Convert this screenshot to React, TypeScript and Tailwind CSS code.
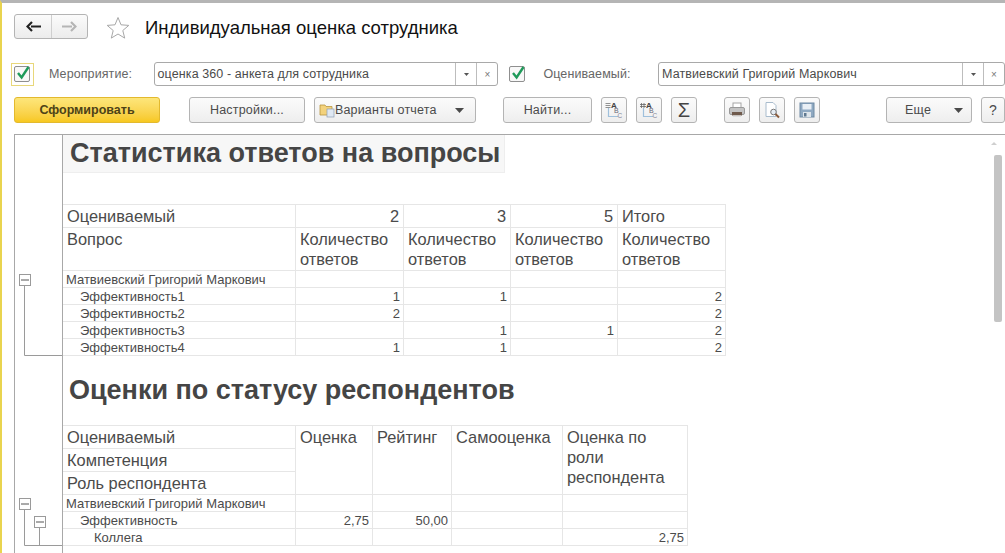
const btnBase =
  "flex h-[26px] items-center rounded-[3px] border border-[#b4b4b4] bg-gradient-to-b from-[#fbfbfb] to-[#eeeeee] text-[12.500px] text-[#4b4b4b]";
const btn = `${btnBase} justify-center`;

function Caret({ className }: { className?: string }) {
  return (
    <svg width="9" height="5" viewBox="0 0 9 5" className={className}>
      <path d="M0 0h9L4.500 5z" fill="#4a4a4a" />
    </svg>
  );
}

function Check() {
  return (
    <span className="flex h-[16px] w-[16px] items-center justify-center rounded-[2px] border border-[#8f8f8f] bg-[#f8f8f8]">
      <svg width="16" height="16" viewBox="0 0 16 16" className="-mt-[3px] ml-[1px] shrink-0">
        <path d="M3 8l3.600 4.500L13.500 2" fill="none" stroke="#1f9a5a" strokeWidth="2.400" />
      </svg>
    </span>
  );
}

function Field({ value, className }: { value: string; className: string }) {
  return (
    <div className={`flex h-[24px] items-stretch rounded-[3px] border border-[#a9a9a9] bg-white text-[12.500px] text-[#4b4b4b] ${className}`}>
      <span className="flex-1 truncate pl-[3px] leading-[22px] tracking-[0.1px]">{value}</span>
      <span className="flex w-[21px] items-center justify-center border-l border-[#bdbdbd]">
        <svg width="5" height="3" viewBox="0 0 5 3">
          <path d="M0 0h5L2.500 3z" fill="#555" />
        </svg>
      </span>
      <span className="flex w-[21px] items-center justify-center border-l border-[#bdbdbd] text-[10px] text-[#777]">×</span>
    </div>
  );
}

function IconBtn({ children, className = "" }: { children: React.ReactNode; className?: string }) {
  return <div className={`${btn} w-[26px] ${className}`}>{children}</div>;
}

function StructIcon({ plus }: { plus?: boolean }) {
  return (
    <svg width="20" height="20" viewBox="0 0 20 20" style={{ fontFamily: "Liberation Sans" }}>
      <path d="M4.500 8v8.500H14" fill="none" stroke="#9fc0dc" strokeWidth="1.200" />
      {plus ? (
        <path d="M1 4.500h6M1 6.500h6M2.500 3v5M5 3v5" stroke="#666" strokeWidth="0.800" />
      ) : (
        <path d="M1.500 3.500h5M1.500 5.500h5M1.500 7.500h5" stroke="#777" strokeWidth="0.800" />
      )}
      <text x="7" y="8" fontSize="8" fontWeight="700" fill="#444">A</text>
      <text x="10" y="13" fontSize="7" fill="#667">B</text>
      <text x="13.500" y="18" fontSize="6.500" fill="#889">C</text>
    </svg>
  );
}

function TitleBar() {
  return (
    <div className="flex h-[50px] items-center pl-[12px]">
      <div className="-mt-[3px] flex h-[25px] w-[74px] rounded-[3px] border border-[#b4b4b4] bg-gradient-to-b from-[#fbfbfb] to-[#ececec]">
        <span className="flex w-[37px] items-center justify-center border-r border-[#cfcfcf]">
          <svg width="15" height="11" viewBox="0 0 15 11">
            <path d="M15 5.500H5M6 1L1.500 5.500 6 10" fill="none" stroke="#222" strokeWidth="2.200" />
          </svg>
        </span>
        <span className="flex flex-1 items-center justify-center">
          <svg width="15" height="11" viewBox="0 0 15 11">
            <path d="M0 5.500h10M9 1l4.500 4.500L9 10" fill="none" stroke="#b5b5b5" strokeWidth="2.200" />
          </svg>
        </span>
      </div>
      <svg width="24" height="24" viewBox="0 0 24 24" className="ml-[18px]">
        <path d="M12 1.500l3 7.300 7.800.6-6 5.100 1.900 7.600L12 18l-6.700 4.100 1.900-7.600-6-5.100 7.800-.6z" fill="#fff" stroke="#a8a8a8" strokeWidth="1" />
      </svg>
      <h1 className="ml-[15px] text-[18.500px] leading-none text-[#111]">Индивидуальная оценка сотрудника</h1>
    </div>
  );
}

function FilterRow() {
  return (
    <div className="mt-[9px] flex h-[24px] items-center pl-[9px] text-[12.500px] text-[#666]">
      <span className="flex h-[23px] w-[23px] items-center justify-center border border-[#e8d77a]">
        <Check />
      </span>
      <span className="ml-[15px] w-[105px] tracking-[0.1px]">Мероприятие:</span>
      <Field value="оценка 360 - анкета для сотрудника" className="w-[346px]" />
      <span className="ml-[11px]">
        <Check />
      </span>
      <span className="ml-[18px] w-[115px] tracking-[0.1px]">Оцениваемый:</span>
      <Field value="Матвиевский Григорий Маркович" className="w-[347px] shrink-0" />
    </div>
  );
}

function ButtonRow() {
  return (
    <div className="mt-[11px] flex h-[26px] items-center pl-[12px]">
      <div className="flex h-[26px] w-[146px] items-center justify-center rounded-[3px] border border-[#e3b92e] bg-gradient-to-b from-[#fde67a] to-[#f7c81e] text-[12.500px] font-bold text-[#4d4218]">
        Сформировать
      </div>
      <div className={`${btn} ml-[29px] w-[116px] tracking-[0.2px]`}>Настройки...</div>
      <div className={`${btnBase} ml-[9px] w-[162px] pl-[4px] pr-[11px]`}>
        <svg width="16" height="16" viewBox="0 0 16 16" className="shrink-0">
          <path d="M1 3h5l1 1.500h6V13H1z" fill="#f3d27c" stroke="#b7963f" strokeWidth="0.800" />
          <rect x="8" y="7" width="7" height="8" fill="#dfe8f3" stroke="#8e9db3" strokeWidth="0.700" />
        </svg>
        <span className="flex-1 tracking-[0.15px]">Варианты отчета</span>
        <Caret />
      </div>
      <div className={`${btn} ml-[27px] w-[89px] tracking-[0.2px]`}>Найти...</div>
      <IconBtn className="ml-[9px]">
        <StructIcon />
      </IconBtn>
      <IconBtn className="ml-[9px]">
        <StructIcon plus />
      </IconBtn>
      <IconBtn className="ml-[9px]">
        <span className="text-[20px] leading-none text-[#444]">Σ</span>
      </IconBtn>
      <IconBtn className="ml-[27px]">
        <svg width="20" height="20" viewBox="0 0 20 20">
          <rect x="6" y="3" width="8" height="5" fill="#fff" stroke="#a5a5a5" />
          <rect x="2.500" y="7.500" width="15" height="7" rx="1.500" fill="#c4c4c4" stroke="#999" />
          <rect x="5" y="12" width="10" height="3.500" fill="#6f5a4c" />
          <rect x="6" y="15.500" width="8" height="1.500" fill="#ddd" />
        </svg>
      </IconBtn>
      <IconBtn className="ml-[9px]">
        <svg width="20" height="20" viewBox="0 0 20 20">
          <path d="M4 2.500h7l3 3v11H4z" fill="#fff" stroke="#a9bccd" />
          <circle cx="11.500" cy="12" r="2.800" fill="#e6edf4" stroke="#777" />
          <path d="M13.500 14l3.500 3.500" stroke="#8a5a3a" strokeWidth="2" />
        </svg>
      </IconBtn>
      <IconBtn className="ml-[9px]">
        <svg width="18" height="18" viewBox="0 0 18 18">
          <rect x="2" y="2" width="14" height="14" fill="#8fa9c2" stroke="#6f8aa3" />
          <rect x="4.500" y="3" width="9" height="5.500" fill="#e9eff5" />
          <rect x="5" y="11" width="8" height="5" fill="#dde4ea" />
          <rect x="6" y="12" width="2.500" height="3.500" fill="#5f7890" />
        </svg>
      </IconBtn>
      <div className={`${btnBase} ml-[66px] w-[86px] pr-[8px]`}>
        <span className="flex-1 pl-[18px] tracking-[0.2px]">Еще</span>
        <Caret />
      </div>
      <div className={`${btn} ml-[9px] w-[24px] shrink-0 text-[14px]`}>?</div>
    </div>
  );
}

const cell = "border-b border-r border-[#e6e6e6] overflow-hidden";

function HeadCell({ children, right, className = "" }: { children: React.ReactNode; right?: boolean; className?: string }) {
  return (
    <div className={`${cell} px-[4px] pt-[1px] text-[16.400px] leading-[20px] text-[#4b4b4b] ${right ? "text-right" : ""} ${className}`}>
      {children}
    </div>
  );
}

function DataCell({ children, right, pad = 3 }: { children?: React.ReactNode; right?: boolean; pad?: 3 | 17 | 31 }) {
  const padClass = pad === 31 ? "pl-[31px]" : pad === 17 ? "pl-[17px]" : "pl-[3px]";
  return (
    <div className={`${cell} ${padClass} pr-[3px] text-[13px] leading-[18px] text-[#4b4b4b] whitespace-nowrap ${right ? "text-right" : ""}`}>
      {children}
    </div>
  );
}

const rows1 = [
  ["Эффективность1", "1", "1", "", "2"],
  ["Эффективность2", "2", "", "", "2"],
  ["Эффективность3", "", "1", "1", "2"],
  ["Эффективность4", "1", "1", "", "2"],
];

function Table1() {
  return (
    <div className="mt-[31px] grid w-[663px] grid-cols-[233px_108px_107px_107px_108px] grid-rows-[23px_43px_17px_17px_17px_17px_17px] border-t border-[#e6e6e6]">
      <HeadCell>Оцениваемый</HeadCell>
      <HeadCell right>2</HeadCell>
      <HeadCell right>3</HeadCell>
      <HeadCell right>5</HeadCell>
      <HeadCell>Итого</HeadCell>
      <HeadCell>Вопрос</HeadCell>
      <HeadCell>Количество ответов</HeadCell>
      <HeadCell>Количество ответов</HeadCell>
      <HeadCell>Количество ответов</HeadCell>
      <HeadCell>Количество ответов</HeadCell>
      <DataCell>Матвиевский Григорий Маркович</DataCell>
      <DataCell />
      <DataCell />
      <DataCell />
      <DataCell />
      {rows1.map((r) => (
        <div key={r[0]} className="contents">
          <DataCell pad={17}>{r[0]}</DataCell>
          <DataCell right>{r[1]}</DataCell>
          <DataCell right>{r[2]}</DataCell>
          <DataCell right>{r[3]}</DataCell>
          <DataCell right>{r[4]}</DataCell>
        </div>
      ))}
    </div>
  );
}

function Table2() {
  return (
    <div className="grid w-[625px] grid-cols-[233px_77px_79px_111px_125px] grid-rows-[23px_23px_23px_17px_17px_17px] border-t border-[#e6e6e6]">
      <HeadCell>Оцениваемый</HeadCell>
      <HeadCell className="row-span-3">Оценка</HeadCell>
      <HeadCell className="row-span-3">Рейтинг</HeadCell>
      <HeadCell className="row-span-3">Самооценка</HeadCell>
      <HeadCell className="row-span-3 pr-[16px]">Оценка по роли респондента</HeadCell>
      <HeadCell>Компетенция</HeadCell>
      <HeadCell>Роль респондента</HeadCell>
      <DataCell>Матвиевский Григорий Маркович</DataCell>
      <DataCell />
      <DataCell />
      <DataCell />
      <DataCell />
      <DataCell pad={17}>Эффективность</DataCell>
      <DataCell right>2,75</DataCell>
      <DataCell right>50,00</DataCell>
      <DataCell />
      <DataCell />
      <DataCell pad={31}>Коллега</DataCell>
      <DataCell />
      <DataCell />
      <DataCell />
      <DataCell right>2,75</DataCell>
    </div>
  );
}

function TreeGutter() {
  // grouping lines on the left of the report
  const box = (x: number, y: number) => (
    <g key={`${x}-${y}`}>
      <rect x={x + 0.5} y={y + 0.5} width="11" height="11" fill="#fff" stroke="#9a9a9a" />
      <path d={`M${x + 2} ${y + 6}h8`} stroke="#555" />
    </g>
  );
  return (
    <svg width="47" height="418" viewBox="0 0 47 418" className="box-content shrink-0 border-r border-[#a8a8a8]">
      <path d="M9.500 151v69.500H47" fill="none" stroke="#9a9a9a" />
      {box(4, 139)}
      <path d="M9.500 374v36.500H47M24.500 392v18" fill="none" stroke="#9a9a9a" />
      {box(4, 363)}
      {box(19, 381)}
    </svg>
  );
}

export default function App() {
  return (
    <div
      className="flex h-[553px] w-[1005px] flex-col overflow-hidden border-l-2 border-t-[3px] border-l-[#e9d44f] border-t-[#b5b5b5] bg-white"
      style={{ fontFamily: '"Liberation Sans", Arial, sans-serif' }}
    >
      <TitleBar />
      <FilterRow />
      <ButtonRow />
      <div className="ml-[12px] mt-[11px] flex flex-1 overflow-hidden border-l border-t border-[#a8a8a8]">
        <TreeGutter />
        <div className="relative flex-1">
          <div className="flex h-[38px] w-[442px] items-center border-b border-r border-[#eeeeee] bg-[#f7f7f7] pl-[7px]">
            <h2 className="whitespace-nowrap text-[27px] font-bold leading-none text-[#454545]">Статистика ответов на вопросы</h2>
          </div>
          <Table1 />
          <h2 className="ml-[6px] flex h-[69px] items-center text-[27px] font-bold leading-none text-[#454545]">
            Оценки по статусу респондентов
          </h2>
          <Table2 />
          <span className="absolute right-[8px] top-[7px] h-0 w-0 border-x-[3px] border-b-[3px] border-x-transparent border-b-[#cfcfcf]" />
          <span className="absolute right-[3px] top-[20px] h-[167px] w-[8px] rounded-[2px] bg-[#c4c4c4]" />
        </div>
      </div>
    </div>
  );
}
